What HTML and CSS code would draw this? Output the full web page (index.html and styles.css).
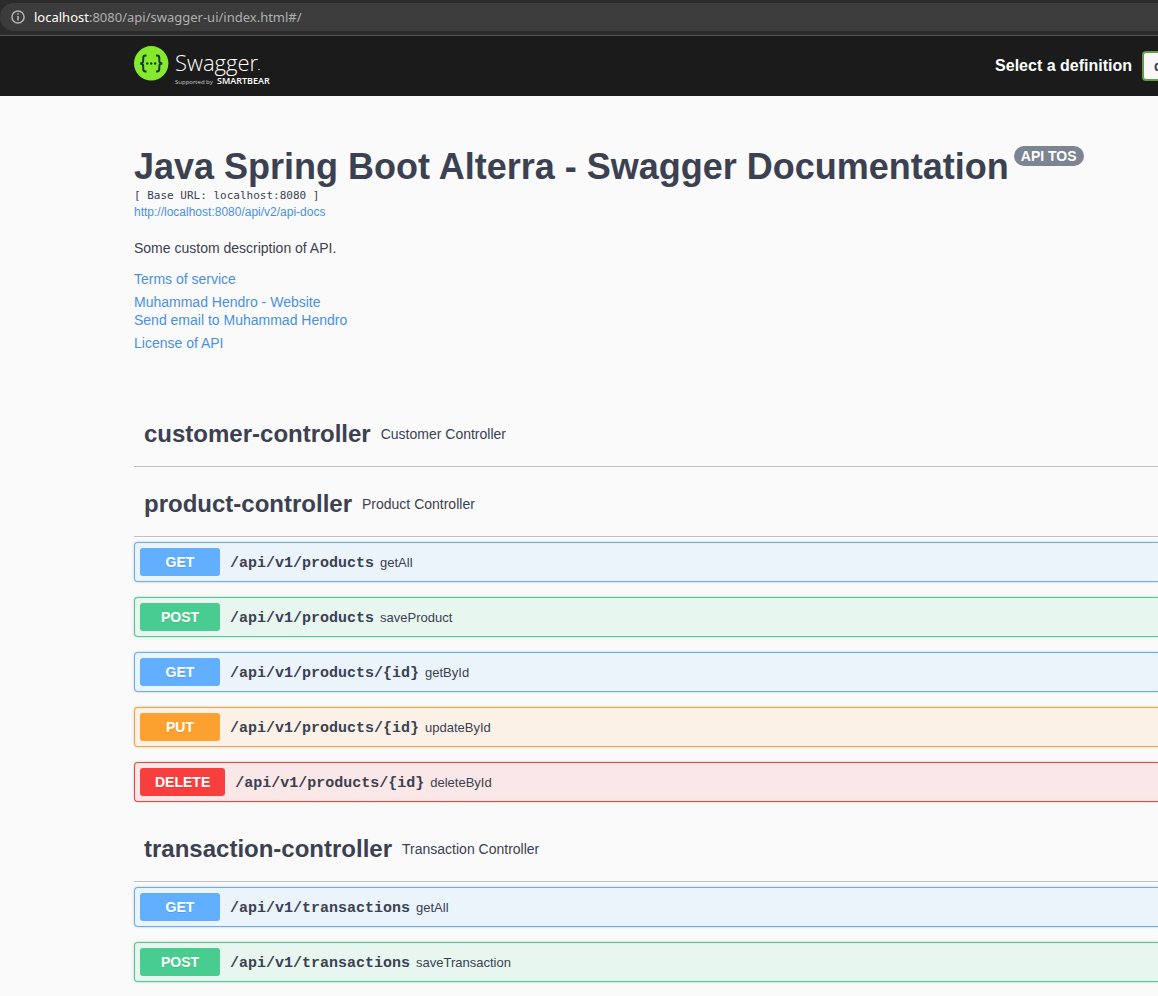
FILE: index.html
```html
<!DOCTYPE html>
<html lang="en">
<head>
<meta charset="utf-8">
<title>Swagger UI</title>
<link rel="stylesheet" href="styles.css">
</head>
<body>
<div class="browser-bar">
  <div class="address">
    <svg class="info-icon" viewBox="0 0 14 14" aria-hidden="true"><circle cx="7" cy="7" r="6.1" fill="none" stroke="#b4b4b4" stroke-width="1.5"/><path d="M6.2 3.2h1.6v1.6H6.2zM6.2 6h1.6v4.6H6.2z" fill="#b4b4b4"/></svg>
    <span><b class="host">localhost</b>:8080/api/swagger-ui/index.html#/</span>
  </div>
</div>
<header class="topbar">
  <a class="logo" href="#" aria-label="Swagger, supported by SmartBear">
    <svg class="logo-image" viewBox="0 0 142 42" aria-hidden="true">
      <circle cx="17.200" cy="18.300" r="17.2" fill="#85ea2d"/>
      <g fill="none" stroke="#173647" stroke-width="2">
        <path d="M12.500 10.500h-1q-2.300 0-2.300 2.400v2.700q0 2.700-2 2.700v.4q2 0 2 2.700v2.700q0 2.400 2.300 2.400h1"/>
        <path d="M22 10.500h1q2.300 0 2.300 2.400v2.700q0 2.700 2 2.700v.4q-2 0-2 2.700v2.700q0 2.400-2.300 2.400h-1"/>
      </g>
      <g fill="#173647"><circle cx="13.200" cy="18.500" r="1.200"/><circle cx="17.200" cy="18.500" r="1.200"/><circle cx="21.200" cy="18.500" r="1.200"/></g>
      <text class="logo-name" x="41" y="26">Swagger</text>
      <path d="M124 24.500h2" stroke="#aaa" stroke-width="1"/>
      <text class="logo-support" x="41" y="39">Supported by</text>
      <text class="logo-brand" x="83" y="39">SMARTBEAR</text>
    </svg>
  </a>
  <form class="definition">
    <label for="definition">Select a definition</label>
    <select id="definition"><option>default</option></select>
  </form>
</header>
<main class="content">
  <section class="info">
    <h1 class="title">Java Spring Boot Alterra - Swagger Documentation <span class="version">API TOS</span></h1>
    <pre class="base-url">[ Base URL: localhost:8080 ]</pre>
    <a class="docs-link" href="#">http://localhost:8080/api/v2/api-docs</a>
    <p class="description">Some custom description of API.</p>
    <div class="links">
      <a href="#">Terms of service</a>
      <div class="contact"><a href="#">Muhammad Hendro - Website</a><a href="#">Send email to Muhammad Hendro</a></div>
      <a href="#">License of API</a>
    </div>
  </section>
  <section class="tag">
    <h2 class="tag-head">customer-controller <small>Customer Controller</small></h2>
  </section>
  <section class="tag">
    <h2 class="tag-head">product-controller <small>Product Controller</small></h2>
    <div class="operations">
      <button class="op get"><span class="method">GET</span><span class="path">/api/v1/products</span><span class="summary">getAll</span></button>
      <button class="op post"><span class="method">POST</span><span class="path">/api/v1/products</span><span class="summary">saveProduct</span></button>
      <button class="op get"><span class="method">GET</span><span class="path">/api/v1/products/{id}</span><span class="summary">getById</span></button>
      <button class="op put"><span class="method">PUT</span><span class="path">/api/v1/products/{id}</span><span class="summary">updateById</span></button>
      <button class="op delete"><span class="method">DELETE</span><span class="path">/api/v1/products/{id}</span><span class="summary">deleteById</span></button>
    </div>
  </section>
  <section class="tag">
    <h2 class="tag-head">transaction-controller <small>Transaction Controller</small></h2>
    <div class="operations">
      <button class="op get"><span class="method">GET</span><span class="path">/api/v1/transactions</span><span class="summary">getAll</span></button>
      <button class="op post"><span class="method">POST</span><span class="path">/api/v1/transactions</span><span class="summary">saveTransaction</span></button>
    </div>
  </section>
</main>
</body>
</html>
```
FILE: styles.css
```css
* { box-sizing: border-box; }
html { overflow-x: hidden; }
body {
  margin: 0;
  overflow-x: hidden;
  background: #fafafa;
  color: #3b4151;
  font-family: "Liberation Sans", Arial, sans-serif;
  font-size: 14px;
}
a { color: #4990e2; text-decoration: none; }

.browser-bar {
  padding: 3px 0 4px;
  background: #2b2b2b;
  border-bottom: 1px solid #555;
}
.address {
  display: flex;
  align-items: center;
  gap: 9px;
  height: 28px;
  padding-left: 11px;
  border-radius: 14px 0 0 14px;
  background: #3c3c3c;
  color: #b0b0b0;
  font-family: "Noto Sans", "Open Sans", sans-serif;
  font-size: 13px;
}
.info-icon { width: 14px; height: 14px; }
.host { color: #fff; font-weight: 400; }

.topbar {
  display: flex;
  align-items: center;
  height: 60px;
  padding-left: 134px;
  overflow: hidden;
  background: #1b1b1b;
}
.logo { display: flex; }
.logo-image { width: 142px; height: 42px; }
.logo-name { fill: #fff; font: 300 22px "Open Sans", sans-serif; }
.logo-support { fill: #ccc; font: 400 6px "Open Sans", sans-serif; }
.logo-brand { fill: #fff; font: 600 9px "Open Sans", sans-serif; }
.definition {
  display: flex;
  flex: none;
  align-items: center;
  gap: 10px;
  margin-left: auto;
  margin-right: -284px;
  color: #fff;
  font-size: 16px;
  font-weight: 700;
}
.definition select {
  width: 300px;
  height: 30px;
  padding: 0 10px;
  appearance: none;
  border: 2px solid #62a03f;
  border-radius: 4px;
  background: #f7f7f7;
  color: #3b4151;
  font: 700 14px "Liberation Sans", Arial, sans-serif;
}

.content { padding-left: 134px; }
.info { padding: 50px 0 45px; }
.title {
  display: flex;
  align-items: flex-start;
  gap: 5px;
  margin: 0;
  font-size: 36px;
  line-height: 42px;
  white-space: nowrap;
}
.version {
  padding: 2px 7px;
  border-radius: 10px;
  background: #7d8492;
  color: #fff;
  font-size: 14px;
  line-height: 16px;
}
.base-url {
  margin: 0;
  font: 11px/15px "DejaVu Sans Mono", monospace;
}
.docs-link { display: block; font-size: 12px; line-height: 18px; }
.description { margin: 18px 0 13px; line-height: 18px; }
.links { display: flex; flex-direction: column; align-items: flex-start; gap: 5px; line-height: 18px; }
.contact { display: flex; flex-direction: column; }

.tag-head {
  display: flex;
  align-items: center;
  gap: 10px;
  height: 70px;
  margin: 0;
  padding: 5px 10px 0;
  border-bottom: 1px solid #c0c1c5;
  font-size: 24px;
}
.tag-head small { font-size: 14px; font-weight: 400; }
.operations {
  display: flex;
  flex-direction: column;
  gap: 15px;
  padding: 5px 0 10px;
}
.op {
  display: flex;
  align-items: center;
  height: 40px;
  padding: 5px;
  border: 1px solid;
  border-right: 0;
  border-radius: 4px 0 0 4px;
  box-shadow: 0 0 3px rgba(0, 0, 0, .19);
  color: #3b4151;
  font: 13px "Liberation Sans", Arial, sans-serif;
  text-align: left;
}
.method {
  min-width: 80px;
  padding: 6px 15px;
  border-radius: 3px;
  color: #fff;
  font-size: 14px;
  font-weight: 700;
  line-height: 16px;
  text-align: center;
  text-shadow: 0 1px 0 rgba(0, 0, 0, .1);
}
.path {
  padding: 2px 6px 0 10px;
  font: 700 15px "Liberation Mono", monospace;
}
.get { border-color: #61affe; background: #ebf3fb; }
.get .method { background: #61affe; }
.post { border-color: #49cc90; background: #e8f6f0; }
.post .method { background: #49cc90; }
.put { border-color: #fca130; background: #fbf1e6; }
.put .method { background: #fca130; }
.delete { border-color: #f93e3e; background: #fae7e7; }
.delete .method { background: #f93e3e; }
```
